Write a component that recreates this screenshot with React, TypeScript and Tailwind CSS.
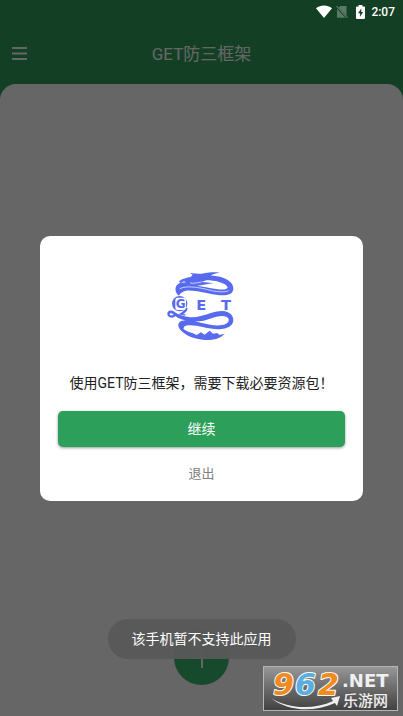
import React from "react";

function StatusBar() {
  return (
    <div className="absolute inset-x-0 top-0 z-20 flex h-6 items-center justify-end pr-2 text-white">
      <svg width="16" height="14" viewBox="0 0 16 14" aria-hidden="true">
        <path d="M0 3.2C4.8-.4 11.2-.4 16 3.2L8 13z" fill="currentColor" />
      </svg>
      <svg className="ml-1" width="12" height="14" viewBox="0 0 12 14" aria-hidden="true">
        <path d="M4.2 1H10.500v10L2.7 2.5zM1 4l8.6 8.8H1z" fill="#597a67" />
        <path d="M.5 1.2l11 11.6" stroke="#597a67" strokeWidth="1.2" />
      </svg>
      <svg className="ml-2" width="9" height="14" viewBox="0 0 9 14" aria-hidden="true">
        <path d="M2.6 0h3.8v1.5H8q1 0 1 1V13q0 1-1 1H1q-1 0-1-1V2.500q0-1 1-1h1.600z" fill="currentColor" />
        <path d="M5.300 3.500L2 8.300h2.100v3.400L7.200 7H5.300z" fill="#134024" />
      </svg>
      <span className="ml-1.5 text-[12px] leading-4 font-medium">2:07</span>
    </div>
  );
}

function DragonLogo() {
  return (
    <svg className="block" width="110" height="100" viewBox="-10 0 330 300" role="img" aria-label="GET">
      <g fill="#586bee">
        <path d="M86 79C95 70 109 69 122 65L127 59L118 54L145 56C160 58 172 49 208 53C194 54 186 58 181 62C207 62 232 70 243 84C252 97 251 111 239 117C228 122 212 121 197 119C165 115 134 104 107 107C97 109 91 113 86 122C75 115 72 99 80 90C87 83 97 83 107 82L101 79L90 84Z" />
        <path d="M53 183C47 171 57 162 70 169C83 180 106 187 126 187C157 187 183 168 217 168C238 169 250 182 249 197C247 213 231 220 213 222C180 226 145 209 113 211C100 212 96 220 103 233C88 227 80 213 86 203C93 194 115 195 134 199C163 206 191 215 216 210C237 206 241 191 228 185C208 178 184 191 160 197C130 202 101 197 82 188C75 184 70 178 64 175C57 173 56 180 62 181C69 183 73 176 70 171L79 176C76 187 62 193 53 183Z" />
        <path d="M84 208C94 222 109 229 128 235L139 240L152 232L163 239L178 227L188 236L201 234L207 240L223 236C210 251 187 256 163 255C122 252 90 236 84 208Z" />
        <circle cx="88" cy="146" r="23" />
        <path d="M104 158L112 160C112 168 104 174 97 178H107L102 182L83 178C94 174 101 168 104 158Z" />
      </g>
      <path
        d="M168 76C196 76 227 84 232 97C231 106 212 104 198 102C175 99 158 94 140 92C156 91 172 87 190 85C182 83 166 82 154 81Z"
        fill="#fff"
      />
      <path d="M88 101C112 90 150 98 184 107C205 111 224 112 235 107M119 84C130 86 144 83 154 81" fill="none" stroke="#fff" strokeWidth="2" />
      <rect x="75" y="128" width="32" height="37" rx="7" fill="#fff" />
      <g fontFamily="'DejaVu Sans','Liberation Sans',sans-serif" fontWeight="700" fontSize="44" fill="#586bee">
        <text x="76" y="160" fontSize="36">G</text>
        <text x="138" y="165">E</text>
        <text x="212" y="165">T</text>
      </g>
    </svg>
  );
}

function Watermark() {
  return (
    <div className="absolute right-[5px] bottom-[5px] z-30 h-[45px] w-[135px] border border-[#b5b5b5] bg-linear-to-b from-[#979797] to-[#424242]">
      <svg className="block h-full w-full overflow-visible" viewBox="0 0 133 43" role="img" aria-label="962.NET 乐游网">
        <path d="M7 31C24 42 50 43 69 34L67 31L76 29L73 39L71 36C49 46 23 44 7 31Z" fill="#eee" />
        <g
          fontFamily="'DejaVu Sans','Liberation Sans',sans-serif"
          fontWeight="700"
          fontStyle="italic"
          fontSize="30"
          stroke="#fff"
          strokeWidth="2"
          strokeLinejoin="round"
          paintOrder="stroke"
        >
          <text x="9" y="28" fill="#f28b1e">9</text>
          <text x="31" y="28" fill="#5aaee0">6</text>
          <text x="54" y="28" fill="#f28b1e">2</text>
        </g>
        <g fill="#f0f0f0">
          <text x="78" y="20" fontSize="18" fontWeight="700" fontFamily="'DejaVu Sans','Liberation Sans',sans-serif">.NET</text>
          <text x="79" y="39" fontSize="15" fontWeight="500" fontFamily="Roboto,'Noto Sans CJK SC',sans-serif">乐游网</text>
        </g>
      </svg>
    </div>
  );
}

export default function App() {
  return (
    <div className="relative flex min-h-screen flex-col bg-[#30a05a] font-[Roboto,'Noto_Sans_CJK_SC',sans-serif]">
      <StatusBar />
      <header className="grid grid-cols-[40px_1fr_40px] items-center pt-6 pb-[1px] text-white">
        <button type="button" aria-label="菜单" className="flex h-[59px] items-center pl-3">
          <svg width="16" height="14" viewBox="0 0 16 14" aria-hidden="true">
            <path d="M0 1h15M0 6.500h15M0 12h15" stroke="currentColor" strokeWidth="1.800" />
          </svg>
        </button>
        <h1 className="text-center text-[17px] leading-6">GET防三框架</h1>
      </header>
      <main className="flex flex-1 items-end justify-center rounded-t-2xl bg-white pb-[31px]">
        <button
          type="button"
          aria-label="添加"
          className="flex size-[55px] items-center justify-center rounded-full bg-[#3aba70] text-white"
        >
          <svg width="22" height="22" viewBox="0 0 22 22" aria-hidden="true">
            <path d="M11 1v20M1 11h20" stroke="currentColor" strokeWidth="2" />
          </svg>
        </button>
      </main>

      <div className="absolute inset-0 z-10 flex items-center justify-center bg-black/60 px-10 pt-5">
        <section
          role="dialog"
          aria-modal="true"
          className="flex w-full max-w-sm flex-col items-center rounded-[10px] bg-white px-[18px] pt-[19px] pb-[9px]"
        >
          <DragonLogo />
          <p className="mt-4 text-center text-sm leading-6 whitespace-nowrap text-[#212121]">
            使用GET防三框架，需要下载必要资源包！
          </p>
          <button
            type="button"
            className="mt-4 h-9 w-full rounded-[5px] bg-[#2ca05a] text-sm text-white shadow-[0_1px_3px_rgba(0,0,0,0.4)]"
          >
            继续
          </button>
          <button type="button" className="mt-[9px] h-9 w-full text-[13px] text-[#808080]">
            退出
          </button>
        </section>
      </div>

      <div className="pointer-events-none absolute inset-x-0 bottom-[57px] z-20 flex justify-center">
        <div
          role="status"
          className="rounded-full bg-[#595959]/95 px-6 py-2 text-sm leading-6 text-white"
        >
          该手机暂不支持此应用
        </div>
      </div>
      <Watermark />
    </div>
  );
}
